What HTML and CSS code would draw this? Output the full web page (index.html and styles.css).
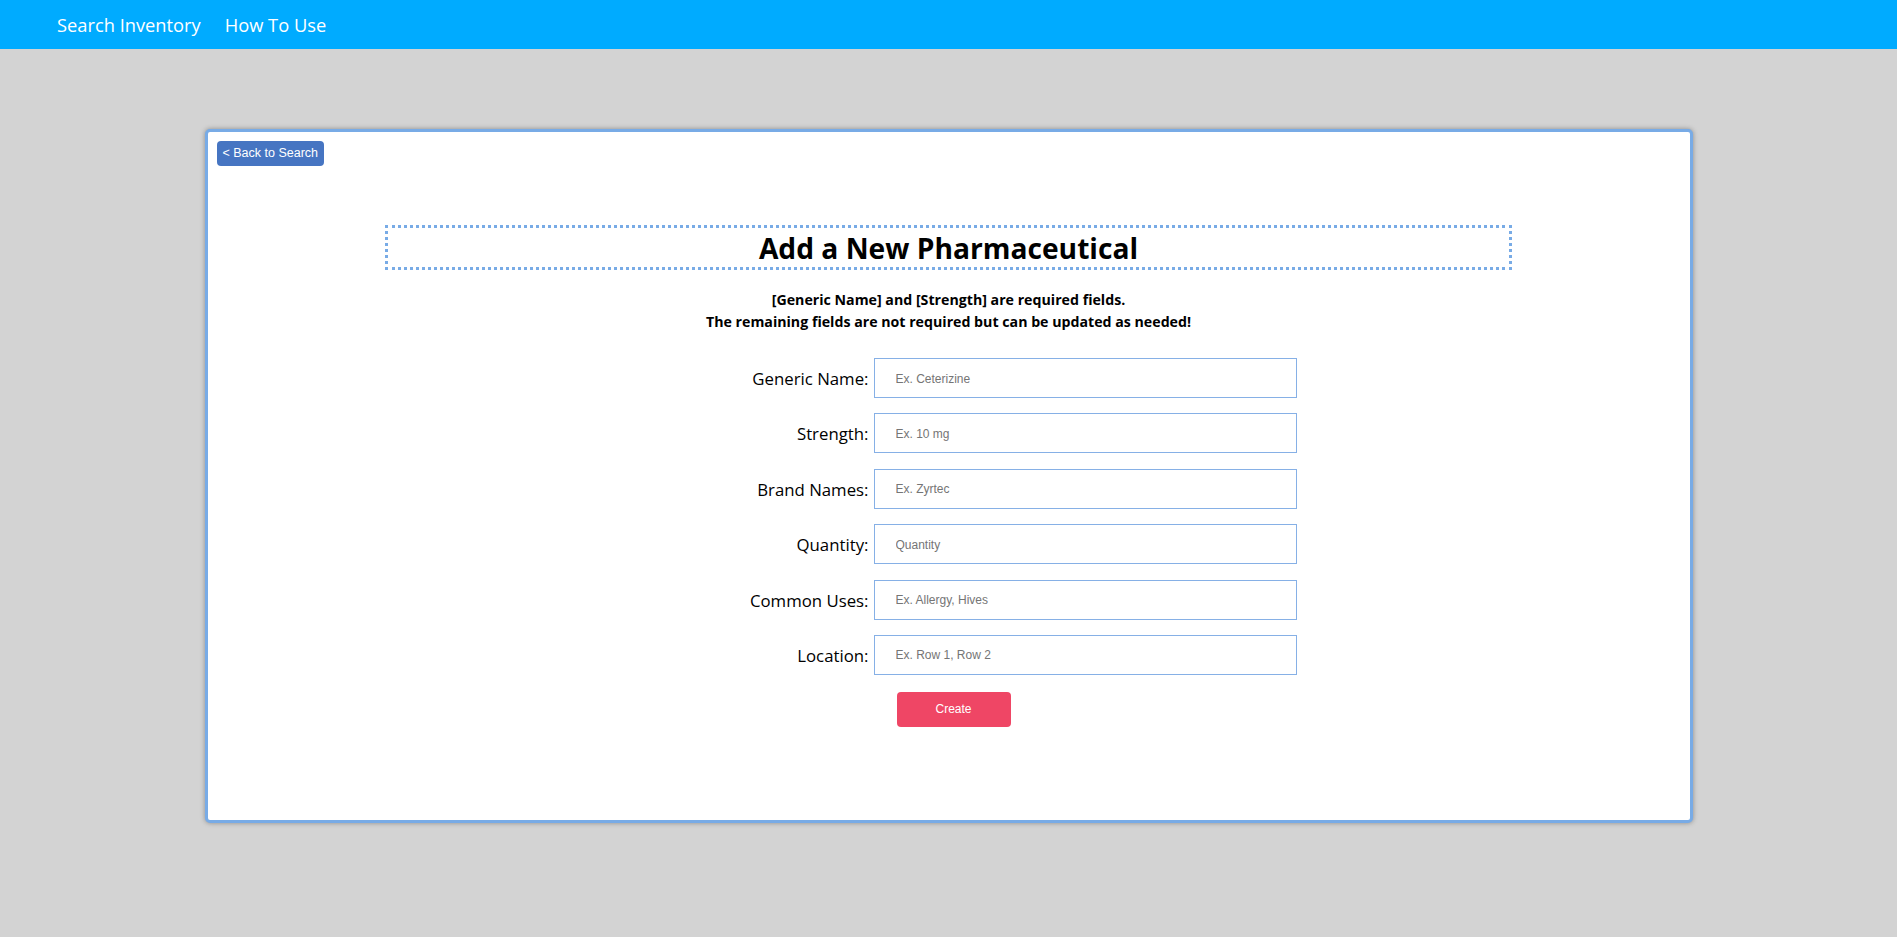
FILE: index.html
```html
<!DOCTYPE html>
<html lang="en">
<head>
<meta charset="utf-8">
<title>Add a New Pharmaceutical</title>
<link rel="stylesheet" href="styles.css">
</head>
<body>
<nav class="topnav">
  <a class="nav-link" href="#">Search Inventory</a>
  <a class="nav-link" href="#">How To Use</a>
</nav>
<main class="page">
  <section class="card">
    <div class="card-top">
      <button class="back-btn" type="button">&lt; Back to Search</button>
    </div>
    <h1 class="title-box">Add a New Pharmaceutical</h1>
    <p class="note">[Generic Name] and [Strength] are required fields.<br>The remaining fields are not required but can be updated as needed!</p>
    <form class="form">
      <label class="field-label" for="f1">Generic Name:</label>
      <input class="field-input" id="f1" type="text" placeholder="Ex. Ceterizine">
      <label class="field-label" for="f2">Strength:</label>
      <input class="field-input" id="f2" type="text" placeholder="Ex. 10 mg">
      <label class="field-label" for="f3">Brand Names:</label>
      <input class="field-input" id="f3" type="text" placeholder="Ex. Zyrtec">
      <label class="field-label" for="f4">Quantity:</label>
      <input class="field-input" id="f4" type="text" placeholder="Quantity">
      <label class="field-label" for="f5">Common Uses:</label>
      <input class="field-input" id="f5" type="text" placeholder="Ex. Allergy, Hives">
      <label class="field-label" for="f6">Location:</label>
      <input class="field-input" id="f6" type="text" placeholder="Ex. Row 1, Row 2">
      <div class="actions">
        <button class="create-btn" type="button">Create</button>
      </div>
    </form>
  </section>
</main>
</body>
</html>
```
FILE: styles.css
```css
* { box-sizing: border-box; }

html, body {
  margin: 0;
  padding: 0;
}

body {
  background: #d3d3d3;
  font-family: "Open Sans", "Noto Sans", sans-serif;
  color: #000;
  min-height: 937px;
}

.topnav {
  height: 49px;
  background: #00abff;
  display: flex;
  align-items: center;
  gap: 24px;
  padding-left: 57px;
}

.nav-link {
  color: #fff;
  text-decoration: none;
  font-size: 18.3px;
  line-height: 24px;
  padding-top: 1px;
}

.page {
  padding-top: 80px;
  display: flex;
  justify-content: center;
}

.card {
  width: 1488px;
  height: 694px;
  background: #fff;
  border: 3px solid #78abe6;
  border-radius: 5px;
  box-shadow: 0 0 5px rgba(0, 0, 0, 0.35);
  padding: 9px;
  display: flex;
  flex-direction: column;
  align-items: center;
}

.card-top {
  align-self: stretch;
  display: flex;
}

.back-btn {
  height: 25px;
  padding: 0 6px 1px;
  border: none;
  border-radius: 4px;
  background: #4675c2;
  color: #fff;
  font-family: "Liberation Sans", Arial, sans-serif;
  font-size: 12.5px;
  cursor: pointer;
}

.title-box {
  margin: 59px 0 0;
  width: 1127px;
  height: 45px;
  border: 3px dotted #78abe6;
  padding-top: 2px;
  font-size: 28.2px;
  font-weight: 700;
  line-height: 37px;
  text-align: center;
}

.note {
  margin: 19px 0 0;
  font-size: 14.2px;
  font-weight: 700;
  line-height: 22px;
  text-align: center;
}

.form {
  margin-top: 25px;
  width: 696px;
  display: grid;
  grid-template-columns: 268px 423px;
  column-gap: 5px;
  row-gap: 15.4px;
  align-items: center;
}

.field-label {
  text-align: right;
  font-size: 16.8px;
  line-height: 24px;
  padding-top: 2px;
}

.field-input {
  height: 40px;
  width: 423px;
  border: 1px solid #86b0e6;
  border-radius: 0;
  padding: 1px 0 0 21px;
  font-family: "Liberation Sans", Arial, sans-serif;
  font-size: 12px;
  color: #000;
  outline: none;
}

.field-input::placeholder {
  color: #757575;
}

.actions {
  grid-column: 2;
  margin-top: 1.6px;
  padding-left: 23px;
}

.create-btn {
  width: 114px;
  height: 35px;
  border: none;
  border-radius: 4px;
  background: #ef4665;
  color: #fff;
  font-family: "Liberation Sans", Arial, sans-serif;
  font-size: 12px;
  cursor: pointer;
}
```
